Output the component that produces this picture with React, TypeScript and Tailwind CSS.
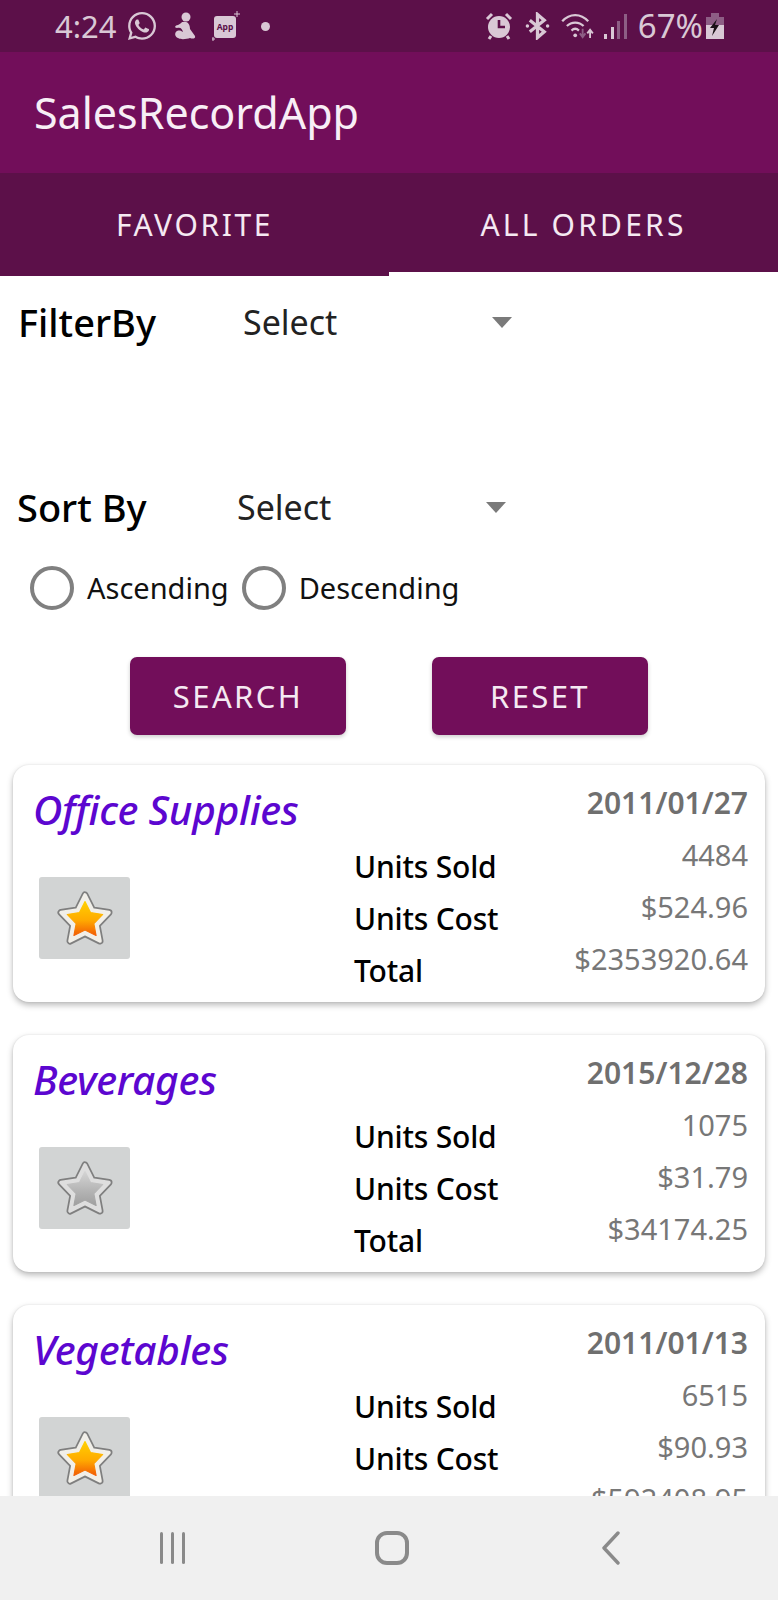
import React from "react";
import { FaWhatsapp } from "react-icons/fa";

const font = { fontFamily: '"Noto Sans", sans-serif' };

function Star({ on, id }: { on: boolean; id: string }) {
  const pts = "30,7 37.5,22 54,24.500 42,37 45,53 30,45.500 15,53 18,37 6,24.500 22.500,22";
  return (
    <svg width="60" height="60" viewBox="0 0 60 60">
      <defs>
        <linearGradient id={id} x1="0" y1="0" x2="0" y2="1">
          <stop offset="0" stopColor={on ? "#ffd000" : "#d4d4d4"} />
          <stop offset="0.55" stopColor={on ? "#ffaa00" : "#b5b5b5"} />
          <stop offset="1" stopColor={on ? "#f25c05" : "#9f9f9f"} />
        </linearGradient>
      </defs>
      <polygon points={pts} fill="#7f7f7f" stroke="#7f7f7f" strokeWidth="7" strokeLinejoin="round" />
      <polygon points={pts} fill={on ? "#f1efe9" : "#dedede"} stroke={on ? "#f1efe9" : "#dedede"} strokeWidth="3.600" strokeLinejoin="round" />
      <g transform="translate(30 32) scale(0.74) translate(-30 -32)">
        <polygon points={pts} fill={`url(#${id})`} stroke={`url(#${id})`} strokeWidth="1.500" strokeLinejoin="round" />
      </g>
    </svg>
  );
}

function Row({ label, value }: { label: string; value: string }) {
  return (
    <div className="flex h-[52px] items-start justify-between">
      <span className="mt-[11px] text-[30px] leading-[40px] font-medium text-black tracking-[-0.2px]">{label}</span>
      <span className="text-[29px] leading-[38px] text-[#777777]">{value}</span>
    </div>
  );
}

function Card({ title, date, units, cost, total, on, id }: { title: string; date: string; units: string; cost: string; total: string; on: boolean; id: string }) {
  return (
    <div className="mx-[13px] mb-[33px] h-[237px] shrink-0 rounded-[16px] bg-white shadow-[0_3px_6px_rgba(0,0,0,0.28),0_0_2px_rgba(0,0,0,0.1)] pl-[20px] pr-[17px] pt-[22px]">
      <div className="flex items-start justify-between">
        <span className="text-[40.5px] leading-[46px] font-medium italic text-[#5c06d0] tracking-[-0.3px]">{title}</span>
        <span className="mt-[-4px] text-[30px] leading-[40px] font-semibold text-[#6f6f6f]">{date}</span>
      </div>
      <div className="flex">
        <div className="mt-[44px] ml-[6px] flex h-[82px] w-[91px] shrink-0 items-center justify-center rounded-[3px] bg-[#d2d4d4]">
          <Star on={on} id={id} />
        </div>
        <div className="ml-[224px] mt-[3px] flex-1">
          <Row label="Units Sold" value={units} />
          <Row label="Units Cost" value={cost} />
          <Row label="Total" value={total} />
        </div>
      </div>
    </div>
  );
}

function Dropdown({ label, width }: { label: string; width: string }) {
  return (
    <div className={`flex items-center justify-between ${width}`}>
      <span className="text-[34px] leading-[44px] text-[#222222]">{label}</span>
      <svg width="20" height="11" viewBox="0 0 20 11"><polygon points="0,0 20,0 10,11" fill="#7a7a7a" /></svg>
    </div>
  );
}

function Radio({ label }: { label: string }) {
  return (
    <div className="flex items-center">
      <div className="h-[44px] w-[44px] rounded-full border-[4px] border-[#808080]" />
      <span className="ml-[13px] text-[29px] leading-[40px] text-[#111111]">{label}</span>
    </div>
  );
}

function Battery() {
  return (
    <svg width="18" height="26" viewBox="0 0 18 26">
      <rect x="5" y="0" width="8" height="4" fill="#8d5e85" />
      <rect x="0" y="4" width="18" height="8" fill="#8d5e85" />
      <rect x="0" y="12" width="18" height="14" fill="#d9c8d5" />
      <polygon points="11,6 4,15 8,15 6,23 13,12 9,12" fill="#1a1016" />
    </svg>
  );
}

function Alarm() {
  return (
    <svg width="28" height="28" viewBox="0 0 28 28">
      <circle cx="14" cy="15" r="11" fill="#d9c8d5" />
      <path d="M14 8v7h6" fill="none" stroke="#5c1049" strokeWidth="2.600" />
      <path d="M2 7 7 2M26 7l-5-5" stroke="#d9c8d5" strokeWidth="3" />
      <path d="M6 24 4 27M22 24l2 3" stroke="#d9c8d5" strokeWidth="3" />
    </svg>
  );
}

function Bluetooth() {
  return (
    <svg width="25" height="28" viewBox="0 0 26 28" fill="none">
      <path d="M5 8 20 20 13 26V2l7 6L5 20" stroke="#d9c8d5" strokeWidth="3.400" />
      <circle cx="2.500" cy="14" r="1.800" fill="#d9c8d5" />
      <circle cx="23.500" cy="14" r="1.800" fill="#d9c8d5" />
    </svg>
  );
}

function Wifi() {
  return (
    <svg width="34" height="26" viewBox="0 0 36 28" fill="none">
      <path d="M1 9C9 0 21 0 29 9" stroke="#d9c8d5" strokeWidth="2.400" />
      <path d="M6 14c5-5 13-5 18 0" stroke="#d9c8d5" strokeWidth="2.400" />
      <path d="M11 19c2.500-2.500 5.500-2.500 8 0" stroke="#d9c8d5" strokeWidth="2.400" />
      <circle cx="15" cy="24" r="2" fill="#d9c8d5" />
      <path d="M23 17v8M20 22l3 4 3-4" stroke="#8d5e85" strokeWidth="2" />
      <path d="M31 27v-8M28 22l3-4 3 4" stroke="#d9c8d5" strokeWidth="2" />
    </svg>
  );
}

function Signal() {
  return (
    <svg width="23" height="25" viewBox="0 0 23 25">
      <rect x="0" y="20" width="3" height="5" fill="#d9c8d5" />
      <rect x="7" y="13" width="3" height="12" fill="#d9c8d5" />
      <rect x="13" y="7" width="3" height="18" fill="#8d5e85" />
      <rect x="20" y="0" width="3" height="25" fill="#8d5e85" />
    </svg>
  );
}

function Baby() {
  return (
    <svg width="24" height="28" viewBox="0 0 24 28">
      <circle cx="13" cy="5" r="4.500" fill="#d9c8d5" />
      <path d="M10 10c5-1 7 3 7 7l5 7c1 3-3 3-5 2-3 1-9 2-12 0-3-1-4-5-1-7 3-1 4 0 6 1-1-3-2-5-6-4-3 0-2-3 1-3 3-1 3-3 5-3z" fill="#d9c8d5" />
    </svg>
  );
}

function AppIcon() {
  return (
    <svg width="28" height="30" viewBox="0 0 28 30">
      <rect x="2" y="5" width="22" height="22" rx="3" fill="#d9c8d5" />
      <path d="M25 0v6M22 3h6M1 26v4M-1 28h4" stroke="#d9c8d5" strokeWidth="1" />
      <text x="13" y="19" textAnchor="middle" fontSize="8.500" fontWeight="700" fill="#5c1049" fontFamily="Noto Sans, sans-serif">App</text>
    </svg>
  );
}

export default function App() {
  return (
    <div style={font} className="flex h-[1600px] w-[778px] flex-col overflow-hidden bg-white">
      <div className="flex h-[52px] shrink-0 items-center justify-between bg-[#5c1049] pl-[55px] pr-[54px] text-[#d9c8d5]">
        <div className="flex items-center">
          <span className="text-[31px] leading-[40px]">4:24</span>
          <FaWhatsapp className="ml-[9px]" size={32} />
          <span className="ml-[15px] flex"><Baby /></span>
          <span className="ml-[15px] flex"><AppIcon /></span>
          <span className="ml-[21px] h-[9px] w-[9px] rounded-full bg-[#d9c8d5]" />
        </div>
        <div className="flex items-center">
          <Alarm />
          <span className="ml-[12px] flex"><Bluetooth /></span>
          <span className="ml-[11px] flex"><Wifi /></span>
          <span className="ml-[9px] flex"><Signal /></span>
          <span className="ml-[11px] text-[33px] leading-[40px]">67%</span>
          <span className="ml-[3px] flex"><Battery /></span>
        </div>
      </div>

      <div className="flex h-[121px] shrink-0 items-center bg-[#720e5a] pl-[34px]">
        <span className="text-[43px] leading-[54px] text-[#f8eef6]">SalesRecordApp</span>
      </div>

      <div className="flex h-[103px] shrink-0 items-start bg-white">
        <div className="flex h-[103px] w-[389px] items-center justify-center bg-[#5c1049]">
          <span className="text-[30px] leading-[36px] tracking-[2.600px] text-[#f5e9f2]">FAVORITE</span>
        </div>
        <div className="flex h-[99px] w-[389px] items-center justify-center bg-[#5c1049] pt-[4px]">
          <span className="text-[30px] leading-[36px] tracking-[3.200px] text-[#f5e9f2]">ALL ORDERS</span>
        </div>
      </div>

      <div className="flex flex-1 flex-col overflow-hidden">
        <div className="mt-[22px] flex h-[52px] items-center pl-[18px]">
          <span className="w-[225px] text-[38px] leading-[48px] font-medium text-black">FilterBy</span>
          <Dropdown label="Select" width="w-[269px]" />
        </div>

        <div className="mt-[137px] flex h-[52px] items-center pl-[17px]">
          <span className="w-[220px] text-[38px] leading-[48px] font-medium text-black">Sort By</span>
          <Dropdown label="Select" width="w-[269px]" />
        </div>

        <div className="mt-[35px] flex items-center gap-[13px] pl-[30px]">
          <Radio label="Ascending" />
          <Radio label="Descending" />
        </div>

        <div className="mt-[47px] flex pl-[130px]">
          <div className="flex h-[78px] w-[216px] items-center justify-center rounded-[7px] bg-[#720e5a] shadow-[0_2px_4px_rgba(0,0,0,0.2)]">
            <span className="text-[31px] leading-[36px] tracking-[2.400px] text-[#f5e9f2]">SEARCH</span>
          </div>
          <div className="ml-[86px] flex h-[78px] w-[216px] items-center justify-center rounded-[7px] bg-[#720e5a] shadow-[0_2px_4px_rgba(0,0,0,0.2)]">
            <span className="text-[31px] leading-[36px] tracking-[2.400px] text-[#f5e9f2]">RESET</span>
          </div>
        </div>

        <div className="mt-[30px] flex flex-col">
          <Card title="Office Supplies" date="2011/01/27" units="4484" cost="$524.96" total="$2353920.64" on id="s1" />
          <Card title="Beverages" date="2015/12/28" units="1075" cost="$31.79" total="$34174.25" on={false} id="s2" />
          <Card title="Vegetables" date="2011/01/13" units="6515" cost="$90.93" total="$592408.95" on id="s3" />
        </div>
      </div>

      <div className="flex h-[104px] shrink-0 items-center bg-[#f0f0f0]">
        <div className="ml-[160px] flex h-[32px] gap-[8px]">
          <span className="h-full w-[3px] rounded-full bg-[#8a8a8a]" />
          <span className="h-full w-[3px] rounded-full bg-[#8a8a8a]" />
          <span className="h-full w-[3px] rounded-full bg-[#8a8a8a]" />
        </div>
        <div className="ml-[190px] h-[34px] w-[34px] rounded-[12px] border-[4px] border-[#8a8a8a]" />
        <svg className="ml-[191px]" width="22" height="34" viewBox="0 0 22 34" fill="none">
          <path d="M18 2 4 17l14 15" stroke="#8a8a8a" strokeWidth="3.400" strokeLinecap="round" strokeLinejoin="round" />
        </svg>
      </div>
    </div>
  );
}
